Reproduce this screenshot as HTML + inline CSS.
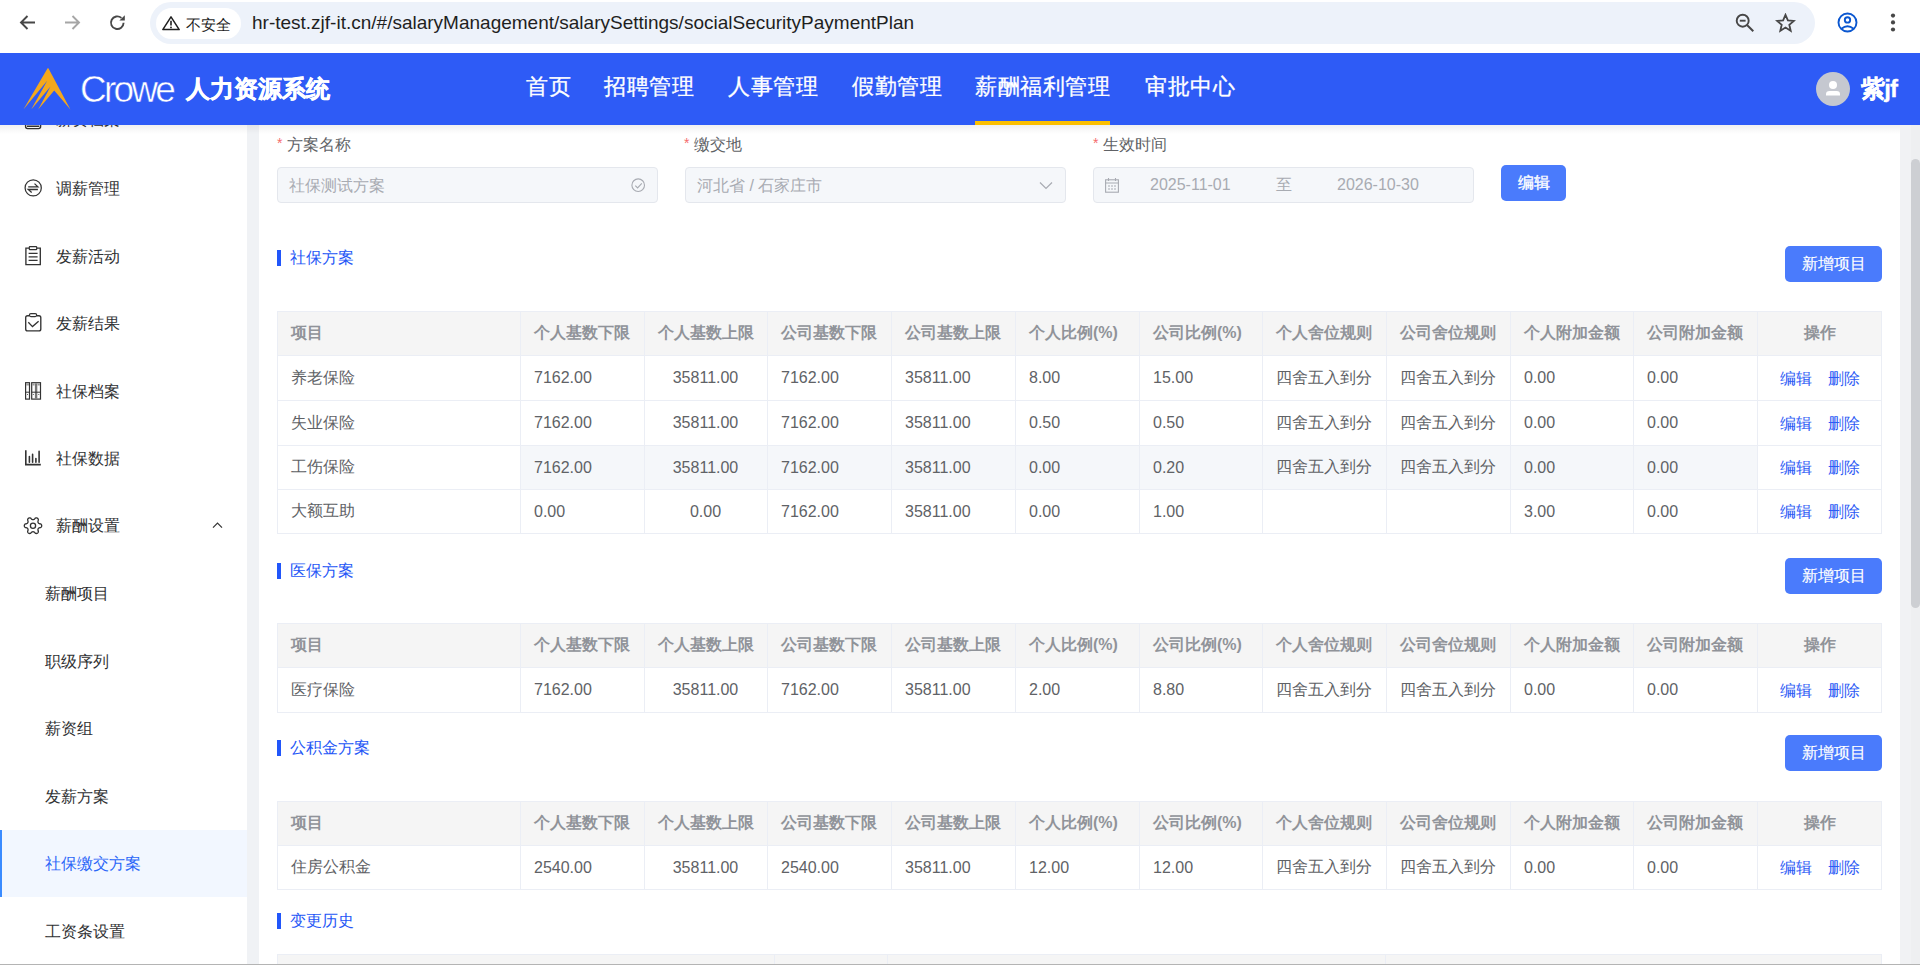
<!DOCTYPE html>
<html><head><meta charset="utf-8">
<style>
*{box-sizing:border-box;margin:0;padding:0}
html,body{width:1920px;height:965px;overflow:hidden;background:#fff;font-family:"Liberation Sans",sans-serif;color:#303133}
.abs{position:absolute}
#chrome{position:absolute;left:0;top:0;width:1920px;height:53px;background:#fff}
#omni{position:absolute;left:150px;top:2px;width:1665px;height:42px;border-radius:21px;background:#edf2fa}
#chip{position:absolute;left:156px;top:8px;width:85px;height:31px;border-radius:15.5px;background:#fff}
#url{position:absolute;left:252px;top:11px;font-size:19px;line-height:24px;color:#1f1f1f;white-space:nowrap}
#hdr{position:absolute;left:0;top:53px;width:1920px;height:72px;background:#2e5bf6}
.nav{position:absolute;top:0;height:72px;line-height:67.5px;font-size:22px;letter-spacing:0.5px;color:#fff;white-space:nowrap;-webkit-text-stroke:0.3px #fff}
#side{position:absolute;left:0;top:125px;width:247px;height:840px;background:#fff;overflow:hidden}
.mi{position:absolute;left:0;width:247px;height:67.4px;font-size:16px;color:#303133;white-space:nowrap}
.mi span{position:absolute;top:50%;transform:translateY(-50%);line-height:20px;margin-top:1px}
#mainbg{position:absolute;left:247px;top:125px;width:1673px;height:840px;background:#f0f2f5}
#card{position:absolute;left:259px;top:125px;width:1641px;height:840px;background:#fff}
#content{position:absolute;left:0;top:0;width:1920px;height:965px;overflow:hidden}
#shadow{position:absolute;left:0;top:125px;width:1920px;height:9px;background:linear-gradient(rgba(0,0,0,0.06),rgba(0,0,0,0))}
.ic{position:absolute;left:24px;top:50%;transform:translateY(-50%);height:19px;display:flex;align-items:center}
.chev{position:absolute;left:212px;display:block}
.mi.act{background:#f2f7ff;color:#2a66f8}
.mi.act::before{content:"";position:absolute;left:0;top:0;width:2px;height:100%;background:#3a8bff}
.tbl{position:absolute}
.th-bg{position:absolute;left:0;width:100%;background:#f5f5f5}
.th,.td{position:absolute;padding-left:14px;display:flex;align-items:center;white-space:nowrap;font-size:16px}
.th{font-weight:bold;color:#909399}
.td{color:#606266}
.th.c,.td.c{justify-content:center;padding-left:0}
.td.op{justify-content:center;padding-left:0}
.td.op a{color:#2d5bf5;margin:0 8px;position:relative;top:1px}
.hov{position:absolute;background:#f5f7fa}
.hl{position:absolute;left:0;width:100%;height:1px;background:#ebeef5}
.vl{position:absolute;top:0;bottom:0;width:1px;background:#ebeef5}
.sec{position:absolute;left:277px;height:16px;width:200px;color:#2456f6;white-space:nowrap}
.sec i{position:absolute;left:0;top:0;width:4px;height:16px;background:#2156fa}
.sec span{position:absolute;left:13px;top:-2px;font-size:16px;line-height:20px}
.btn{position:absolute;height:36px;border-radius:5px;background:#4a7bfc;color:#fff;font-size:16px;-webkit-text-stroke:0.15px #fff;display:flex;align-items:center;justify-content:center}
.btn.add{left:1785px;width:97px}
.lbl{position:absolute;font-size:16px;color:#606266;white-space:nowrap;top:135px;line-height:20px}
.lbl b{color:#f56c6c;font-weight:normal;font-size:14px;position:relative;top:-2px;margin-right:5px}
.inp{position:absolute;top:167px;width:381px;height:36px;border:1px solid #e4e7ed;border-radius:4px;background:#f5f7fa;color:#a8abb2;font-size:16px;line-height:34px;white-space:nowrap}
</style></head>
<body>
<div id="chrome">
  <div id="omni"></div>
  <div id="chip"></div>
  <div id="url">hr-test.zjf-it.cn/#/salaryManagement/salarySettings/socialSecurityPaymentPlan</div>
  <svg class="abs" style="left:18px;top:13px" width="19" height="19" viewBox="0 0 19 19"><path d="M17 9.5H3.5M9.5 3L3 9.5L9.5 16" fill="none" stroke="#474747" stroke-width="1.9"/></svg>
  <svg class="abs" style="left:63px;top:13px" width="19" height="19" viewBox="0 0 19 19"><path d="M2 9.5H15.5M9.5 3L16 9.5L9.5 16" fill="none" stroke="#a6a6a6" stroke-width="1.9"/></svg>
  <svg class="abs" style="left:108px;top:13px" width="19" height="19" viewBox="0 0 19 19"><path d="M15.6 9.8A6.3 6.3 0 1 1 13.4 4.9" fill="none" stroke="#474747" stroke-width="1.9"/><path d="M16.8 2.2V7.6H11.4Z" fill="#474747"/></svg>
  <svg class="abs" style="left:161px;top:15px" width="20" height="16" viewBox="0 0 20 16"><path d="M10 1.8L18.2 14.6H1.8Z" fill="none" stroke="#1f1f1f" stroke-width="1.5" stroke-linejoin="round"/><path d="M10 5.8V10.4" stroke="#1f1f1f" stroke-width="1.6"/><circle cx="10" cy="12.4" r="0.9" fill="#1f1f1f"/></svg>
  <div class="abs" style="left:186px;top:14.5px;font-size:15.3px;line-height:20px;color:#1f1f1f">不安全</div>
  <svg class="abs" style="left:1734px;top:12px" width="22" height="22" viewBox="0 0 22 22"><circle cx="8.7" cy="8.7" r="6" fill="none" stroke="#474747" stroke-width="1.9"/><path d="M13 13L19.3 19.3" stroke="#474747" stroke-width="2"/><path d="M5.8 8.7H11.6" stroke="#474747" stroke-width="1.9"/></svg>
  <svg class="abs" style="left:1775px;top:13px" width="21" height="20" viewBox="0 0 21 20"><path d="M10.5 1.8L12.9 7.4L18.9 7.9L14.3 11.8L15.7 17.8L10.5 14.6L5.3 17.8L6.7 11.8L2.1 7.9L8.1 7.4Z" fill="none" stroke="#474747" stroke-width="1.8" stroke-linejoin="miter"/></svg>
  <svg class="abs" style="left:1837px;top:12px" width="21" height="21" viewBox="0 0 21 21"><circle cx="10.5" cy="10.5" r="9" fill="none" stroke="#0b57d0" stroke-width="1.9"/><circle cx="10.5" cy="7.9" r="2.7" fill="none" stroke="#0b57d0" stroke-width="1.9"/><path d="M4.4 16.8Q10.5 11.6 16.6 16.8" fill="none" stroke="#0b57d0" stroke-width="1.9"/></svg>
  <svg class="abs" style="left:1889px;top:12px" width="8" height="22" viewBox="0 0 8 22"><circle cx="4" cy="3.6" r="2.1" fill="#474747"/><circle cx="4" cy="10.4" r="2.1" fill="#474747"/><circle cx="4" cy="17.5" r="2.1" fill="#474747"/></svg>
</div>
<div id="content"><div id="mainbg"></div><div id="card"></div>
<div class="lbl" style="left:277px"><b>*</b>方案名称</div>
<div class="lbl" style="left:684px"><b>*</b>缴交地</div>
<div class="lbl" style="left:1093px"><b>*</b>生效时间</div>
<div class="inp" style="left:277px"><span style="position:absolute;left:11px;top:1px">社保测试方案</span><svg style="position:absolute;left:353px;top:10px" width="15" height="15" viewBox="0 0 15 15"><circle cx="7.2" cy="7.2" r="6.3" fill="none" stroke="#a8abb2" stroke-width="1.1"/><path d="M4.3 7.6L6.6 9.9L10.8 5.4" fill="none" stroke="#a8abb2" stroke-width="1.1"/></svg></div>
<div class="inp" style="left:685px"><span style="position:absolute;left:11px;top:1px">河北省 / 石家庄市</span><svg style="position:absolute;left:352.5px;top:13px" width="14" height="9" viewBox="0 0 14 9"><path d="M1 1.5L7 7.5L13 1.5" fill="none" stroke="#a8abb2" stroke-width="1.2"/></svg></div>
<div class="inp" style="left:1093px"><svg style="position:absolute;left:11px;top:10px" width="14" height="15" viewBox="0 0 14 15"><rect x="0.6" y="1.8" width="12.8" height="12.4" fill="none" stroke="#a8abb2" stroke-width="1.1"/><path d="M0.6 5H13.4M3.5 0V3M10.5 0V3M3 8H5M6 8H8M9 8H11M3 11H5M6 11H8M9 11H11" stroke="#a8abb2" stroke-width="1.1"/></svg><span style="position:absolute;left:56px">2025-11-01</span><span style="position:absolute;left:182px">至</span><span style="position:absolute;left:243px">2026-10-30</span></div>
<div class="btn" style="left:1501px;top:165px;width:65px;-webkit-text-stroke:0.35px #fff">编辑</div>
<div class="sec" style="top:250px"><i></i><span>社保方案</span></div><div class="btn add" style="top:246px">新增项目</div>
<div class="tbl" style="left:277px;top:311px;width:1605px;height:223px">
<div class="th-bg" style="top:0;height:44px"></div>
<div class="th" style="left:0px;width:243px;top:1px;height:43px">项目</div>
<div class="th" style="left:243px;width:124px;top:1px;height:43px">个人基数下限</div>
<div class="th c" style="left:367px;width:123px;top:1px;height:43px">个人基数上限</div>
<div class="th" style="left:490px;width:124px;top:1px;height:43px">公司基数下限</div>
<div class="th" style="left:614px;width:124px;top:1px;height:43px">公司基数上限</div>
<div class="th" style="left:738px;width:124px;top:1px;height:43px">个人比例(%)</div>
<div class="th" style="left:862px;width:123px;top:1px;height:43px">公司比例(%)</div>
<div class="th" style="left:985px;width:124px;top:1px;height:43px">个人舍位规则</div>
<div class="th" style="left:1109px;width:124px;top:1px;height:43px">公司舍位规则</div>
<div class="th" style="left:1233px;width:123px;top:1px;height:43px">个人附加金额</div>
<div class="th" style="left:1356px;width:124px;top:1px;height:43px">公司附加金额</div>
<div class="th c" style="left:1480px;width:125px;top:1px;height:43px">操作</div>
<div class="td" style="left:0px;width:243px;top:45px;height:44px">养老保险</div>
<div class="td" style="left:243px;width:124px;top:45px;height:44px">7162.00</div>
<div class="td c" style="left:367px;width:123px;top:45px;height:44px">35811.00</div>
<div class="td" style="left:490px;width:124px;top:45px;height:44px">7162.00</div>
<div class="td" style="left:614px;width:124px;top:45px;height:44px">35811.00</div>
<div class="td" style="left:738px;width:124px;top:45px;height:44px">8.00</div>
<div class="td" style="left:862px;width:123px;top:45px;height:44px">15.00</div>
<div class="td" style="left:985px;width:124px;top:45px;height:44px">四舍五入到分</div>
<div class="td" style="left:1109px;width:124px;top:45px;height:44px">四舍五入到分</div>
<div class="td" style="left:1233px;width:123px;top:45px;height:44px">0.00</div>
<div class="td" style="left:1356px;width:124px;top:45px;height:44px">0.00</div>
<div class="td op" style="left:1480px;width:125px;top:45px;height:44px"><a>编辑</a><a>删除</a></div>
<div class="td" style="left:0px;width:243px;top:90px;height:44px">失业保险</div>
<div class="td" style="left:243px;width:124px;top:90px;height:44px">7162.00</div>
<div class="td c" style="left:367px;width:123px;top:90px;height:44px">35811.00</div>
<div class="td" style="left:490px;width:124px;top:90px;height:44px">7162.00</div>
<div class="td" style="left:614px;width:124px;top:90px;height:44px">35811.00</div>
<div class="td" style="left:738px;width:124px;top:90px;height:44px">0.50</div>
<div class="td" style="left:862px;width:123px;top:90px;height:44px">0.50</div>
<div class="td" style="left:985px;width:124px;top:90px;height:44px">四舍五入到分</div>
<div class="td" style="left:1109px;width:124px;top:90px;height:44px">四舍五入到分</div>
<div class="td" style="left:1233px;width:123px;top:90px;height:44px">0.00</div>
<div class="td" style="left:1356px;width:124px;top:90px;height:44px">0.00</div>
<div class="td op" style="left:1480px;width:125px;top:90px;height:44px"><a>编辑</a><a>删除</a></div>
<div class="hov" style="left:243px;width:1237px;top:135px;height:43px"></div>
<div class="td" style="left:0px;width:243px;top:135px;height:43px">工伤保险</div>
<div class="td" style="left:243px;width:124px;top:135px;height:43px">7162.00</div>
<div class="td c" style="left:367px;width:123px;top:135px;height:43px">35811.00</div>
<div class="td" style="left:490px;width:124px;top:135px;height:43px">7162.00</div>
<div class="td" style="left:614px;width:124px;top:135px;height:43px">35811.00</div>
<div class="td" style="left:738px;width:124px;top:135px;height:43px">0.00</div>
<div class="td" style="left:862px;width:123px;top:135px;height:43px">0.20</div>
<div class="td" style="left:985px;width:124px;top:135px;height:43px">四舍五入到分</div>
<div class="td" style="left:1109px;width:124px;top:135px;height:43px">四舍五入到分</div>
<div class="td" style="left:1233px;width:123px;top:135px;height:43px">0.00</div>
<div class="td" style="left:1356px;width:124px;top:135px;height:43px">0.00</div>
<div class="td op" style="left:1480px;width:125px;top:135px;height:43px"><a>编辑</a><a>删除</a></div>
<div class="td" style="left:0px;width:243px;top:179px;height:43px">大额互助</div>
<div class="td" style="left:243px;width:124px;top:179px;height:43px">0.00</div>
<div class="td c" style="left:367px;width:123px;top:179px;height:43px">0.00</div>
<div class="td" style="left:490px;width:124px;top:179px;height:43px">7162.00</div>
<div class="td" style="left:614px;width:124px;top:179px;height:43px">35811.00</div>
<div class="td" style="left:738px;width:124px;top:179px;height:43px">0.00</div>
<div class="td" style="left:862px;width:123px;top:179px;height:43px">1.00</div>
<div class="td" style="left:985px;width:124px;top:179px;height:43px"></div>
<div class="td" style="left:1109px;width:124px;top:179px;height:43px"></div>
<div class="td" style="left:1233px;width:123px;top:179px;height:43px">3.00</div>
<div class="td" style="left:1356px;width:124px;top:179px;height:43px">0.00</div>
<div class="td op" style="left:1480px;width:125px;top:179px;height:43px"><a>编辑</a><a>删除</a></div>
<div class="hl" style="top:0"></div>
<div class="hl" style="top:44px"></div>
<div class="hl" style="top:89px"></div>
<div class="hl" style="top:134px"></div>
<div class="hl" style="top:178px"></div>
<div class="hl" style="top:222px"></div>
<div class="vl" style="left:0px"></div>
<div class="vl" style="left:243px"></div>
<div class="vl" style="left:367px"></div>
<div class="vl" style="left:490px"></div>
<div class="vl" style="left:614px"></div>
<div class="vl" style="left:738px"></div>
<div class="vl" style="left:862px"></div>
<div class="vl" style="left:985px"></div>
<div class="vl" style="left:1109px"></div>
<div class="vl" style="left:1233px"></div>
<div class="vl" style="left:1356px"></div>
<div class="vl" style="left:1480px"></div>
<div class="vl" style="left:1604px"></div>
</div>
<div class="sec" style="top:563px"><i></i><span>医保方案</span></div><div class="btn add" style="top:558px">新增项目</div>
<div class="tbl" style="left:277px;top:623px;width:1605px;height:90px">
<div class="th-bg" style="top:0;height:44px"></div>
<div class="th" style="left:0px;width:243px;top:1px;height:43px">项目</div>
<div class="th" style="left:243px;width:124px;top:1px;height:43px">个人基数下限</div>
<div class="th c" style="left:367px;width:123px;top:1px;height:43px">个人基数上限</div>
<div class="th" style="left:490px;width:124px;top:1px;height:43px">公司基数下限</div>
<div class="th" style="left:614px;width:124px;top:1px;height:43px">公司基数上限</div>
<div class="th" style="left:738px;width:124px;top:1px;height:43px">个人比例(%)</div>
<div class="th" style="left:862px;width:123px;top:1px;height:43px">公司比例(%)</div>
<div class="th" style="left:985px;width:124px;top:1px;height:43px">个人舍位规则</div>
<div class="th" style="left:1109px;width:124px;top:1px;height:43px">公司舍位规则</div>
<div class="th" style="left:1233px;width:123px;top:1px;height:43px">个人附加金额</div>
<div class="th" style="left:1356px;width:124px;top:1px;height:43px">公司附加金额</div>
<div class="th c" style="left:1480px;width:125px;top:1px;height:43px">操作</div>
<div class="td" style="left:0px;width:243px;top:45px;height:44px">医疗保险</div>
<div class="td" style="left:243px;width:124px;top:45px;height:44px">7162.00</div>
<div class="td c" style="left:367px;width:123px;top:45px;height:44px">35811.00</div>
<div class="td" style="left:490px;width:124px;top:45px;height:44px">7162.00</div>
<div class="td" style="left:614px;width:124px;top:45px;height:44px">35811.00</div>
<div class="td" style="left:738px;width:124px;top:45px;height:44px">2.00</div>
<div class="td" style="left:862px;width:123px;top:45px;height:44px">8.80</div>
<div class="td" style="left:985px;width:124px;top:45px;height:44px">四舍五入到分</div>
<div class="td" style="left:1109px;width:124px;top:45px;height:44px">四舍五入到分</div>
<div class="td" style="left:1233px;width:123px;top:45px;height:44px">0.00</div>
<div class="td" style="left:1356px;width:124px;top:45px;height:44px">0.00</div>
<div class="td op" style="left:1480px;width:125px;top:45px;height:44px"><a>编辑</a><a>删除</a></div>
<div class="hl" style="top:0"></div>
<div class="hl" style="top:44px"></div>
<div class="hl" style="top:89px"></div>
<div class="vl" style="left:0px"></div>
<div class="vl" style="left:243px"></div>
<div class="vl" style="left:367px"></div>
<div class="vl" style="left:490px"></div>
<div class="vl" style="left:614px"></div>
<div class="vl" style="left:738px"></div>
<div class="vl" style="left:862px"></div>
<div class="vl" style="left:985px"></div>
<div class="vl" style="left:1109px"></div>
<div class="vl" style="left:1233px"></div>
<div class="vl" style="left:1356px"></div>
<div class="vl" style="left:1480px"></div>
<div class="vl" style="left:1604px"></div>
</div>
<div class="sec" style="top:740px"><i></i><span>公积金方案</span></div><div class="btn add" style="top:735px">新增项目</div>
<div class="tbl" style="left:277px;top:801px;width:1605px;height:89px">
<div class="th-bg" style="top:0;height:44px"></div>
<div class="th" style="left:0px;width:243px;top:1px;height:43px">项目</div>
<div class="th" style="left:243px;width:124px;top:1px;height:43px">个人基数下限</div>
<div class="th c" style="left:367px;width:123px;top:1px;height:43px">个人基数上限</div>
<div class="th" style="left:490px;width:124px;top:1px;height:43px">公司基数下限</div>
<div class="th" style="left:614px;width:124px;top:1px;height:43px">公司基数上限</div>
<div class="th" style="left:738px;width:124px;top:1px;height:43px">个人比例(%)</div>
<div class="th" style="left:862px;width:123px;top:1px;height:43px">公司比例(%)</div>
<div class="th" style="left:985px;width:124px;top:1px;height:43px">个人舍位规则</div>
<div class="th" style="left:1109px;width:124px;top:1px;height:43px">公司舍位规则</div>
<div class="th" style="left:1233px;width:123px;top:1px;height:43px">个人附加金额</div>
<div class="th" style="left:1356px;width:124px;top:1px;height:43px">公司附加金额</div>
<div class="th c" style="left:1480px;width:125px;top:1px;height:43px">操作</div>
<div class="td" style="left:0px;width:243px;top:45px;height:43px">住房公积金</div>
<div class="td" style="left:243px;width:124px;top:45px;height:43px">2540.00</div>
<div class="td c" style="left:367px;width:123px;top:45px;height:43px">35811.00</div>
<div class="td" style="left:490px;width:124px;top:45px;height:43px">2540.00</div>
<div class="td" style="left:614px;width:124px;top:45px;height:43px">35811.00</div>
<div class="td" style="left:738px;width:124px;top:45px;height:43px">12.00</div>
<div class="td" style="left:862px;width:123px;top:45px;height:43px">12.00</div>
<div class="td" style="left:985px;width:124px;top:45px;height:43px">四舍五入到分</div>
<div class="td" style="left:1109px;width:124px;top:45px;height:43px">四舍五入到分</div>
<div class="td" style="left:1233px;width:123px;top:45px;height:43px">0.00</div>
<div class="td" style="left:1356px;width:124px;top:45px;height:43px">0.00</div>
<div class="td op" style="left:1480px;width:125px;top:45px;height:43px"><a>编辑</a><a>删除</a></div>
<div class="hl" style="top:0"></div>
<div class="hl" style="top:44px"></div>
<div class="hl" style="top:88px"></div>
<div class="vl" style="left:0px"></div>
<div class="vl" style="left:243px"></div>
<div class="vl" style="left:367px"></div>
<div class="vl" style="left:490px"></div>
<div class="vl" style="left:614px"></div>
<div class="vl" style="left:738px"></div>
<div class="vl" style="left:862px"></div>
<div class="vl" style="left:985px"></div>
<div class="vl" style="left:1109px"></div>
<div class="vl" style="left:1233px"></div>
<div class="vl" style="left:1356px"></div>
<div class="vl" style="left:1480px"></div>
<div class="vl" style="left:1604px"></div>
</div>
<div class="sec" style="top:913px"><i></i><span>变更历史</span></div>
<div class="abs" style="left:277px;top:954px;width:1605px;height:11px;background:#f5f5f5;border-top:1px solid #ebeef5;border-left:1px solid #ebeef5;border-right:1px solid #ebeef5"></div>
<div class="abs" style="left:774px;top:954px;width:1px;height:11px;background:#ebeef5"></div>
<div class="abs" style="left:887px;top:954px;width:1px;height:11px;background:#ebeef5"></div>
<div class="abs" style="left:1385px;top:954px;width:1px;height:11px;background:#ebeef5"></div>
</div>
<div id="hdr">
  <div class="nav" style="left:526px">首页</div>
  <div class="nav" style="left:604px">招聘管理</div>
  <div class="nav" style="left:728px">人事管理</div>
  <div class="nav" style="left:852px">假勤管理</div>
  <div class="nav" style="left:975px">薪酬福利管理</div>
  <div class="nav" style="left:1145px">审批中心</div>
  <svg class="abs" style="left:15px;top:7px" width="64" height="58" viewBox="15 60 64 58"><path d="M47.6 68.2H48.4L70.4 109.6L54.2 90.6L38.2 109.6L50.5 86.4L31.2 109.6L47.2 80.8L23.4 109.6Z" fill="#f4a81d"/></svg>
  <div class="abs" style="left:80px;top:1px;height:72px;line-height:72px;font-size:37px;color:#fff;letter-spacing:-2.8px;white-space:nowrap;-webkit-text-stroke:0.5px #2e5bf6">Crowe</div>
  <div class="abs" style="left:186px;top:0;height:72px;line-height:71px;font-size:24px;font-weight:bold;color:#fff;white-space:nowrap;-webkit-text-stroke:0.5px #fff">人力资源系统</div>
  <div class="abs" style="left:975px;top:68px;width:135px;height:4px;background:#fbbf00"></div>
  <div class="abs" style="left:1816px;top:19px;width:34px;height:34px;border-radius:50%;background:#c5c8d0"><svg class="abs" style="left:10px;top:9px" width="14" height="16" viewBox="0 0 14 16"><circle cx="7" cy="4.1" r="4" fill="#fff"/><path d="M0 13Q0 10 3.5 10H10.5Q14 10 14 13V14.6H0Z" fill="#fff"/></svg></div>
  <div class="abs" style="left:1861px;top:1px;height:72px;line-height:70px;font-size:24px;font-weight:bold;color:#fff;white-space:nowrap;letter-spacing:-0.8px;-webkit-text-stroke:0.3px #fff">紫jf</div>
</div>
<div id="side"><div class="mi" style="top:-39.7px"><span style="left:56px">薪资档案</span></div>
<div class="mi" style="top:29.8px"><span style="left:56px">调薪管理</span></div>
<div class="mi" style="top:97.2px"><span style="left:56px">发薪活动</span></div>
<div class="mi" style="top:164.6px"><span style="left:56px">发薪结果</span></div>
<div class="mi" style="top:232.0px"><span style="left:56px">社保档案</span></div>
<div class="mi" style="top:299.4px"><span style="left:56px">社保数据</span></div>
<div class="mi" style="top:366.8px"><span style="left:56px">薪酬设置</span></div>
<svg class="abs" style="left:0;top:0" width="247" height="840" viewBox="0 125 247 840" fill="none" stroke="#333" stroke-width="1.3">
<path d="M25.6 112V126.6Q25.6 128.6 27.6 128.6H38.6Q40.6 128.6 40.6 126.6V112M27 126.2H39.2" stroke-width="1.4"/>
<circle cx="33.2" cy="187.9" r="8.1" stroke-width="1.25"/>
<path d="M28.2 186.9H37.9L34.5 183.6" stroke-width="1.3"/>
<path d="M37.9 189.5H28.2L31.7 192.6" stroke-width="1.3"/>
<path d="M29.2 248.1H25.9V264.6H40.3V248.1H36.8" stroke-width="1.35"/>
<rect x="29.3" y="246.6" width="7.4" height="3.1" rx="0.6" stroke-width="1.2"/>
<path d="M28.6 253.4H37.6M28.6 256.9H37.6M28.6 260.4H37.6" stroke-width="1.3"/>
<path d="M29.4 315.7H27.6Q25.7 315.7 25.7 317.6V329Q25.7 330.9 27.6 330.9H38.9Q40.8 330.9 40.8 329V317.6Q40.8 315.7 38.9 315.7H36.7" stroke-width="1.35"/>
<rect x="29.4" y="313.6" width="7.3" height="3" rx="1.5" stroke-width="1.2"/>
<path d="M28.3 322.3L32.5 326.6L38.6 321.2" stroke-width="1.35"/>
<rect x="25.6" y="382.7" width="3.9" height="16.4" stroke-width="1.2"/>
<rect x="31.7" y="382.7" width="8.8" height="16.4" stroke-width="1.2"/>
<rect x="34.9" y="383.3" width="2.4" height="15.4" fill="#777" stroke="none"/>
<path d="M26.2 384.6H29M32.3 384.6H34.6M37.6 384.6H39.9" stroke="#999" stroke-width="2"/>
<path d="M25.6 392.2H29.5M31.7 392.2H40.5" stroke-width="1"/>
<circle cx="27.5" cy="394.6" r="0.5" fill="#333" stroke="none"/><circle cx="33.3" cy="394.6" r="0.5" fill="#333" stroke="none"/><circle cx="38.8" cy="394.6" r="0.5" fill="#333" stroke="none"/>
<path d="M25.8 450.2V464.6H40.8" stroke-width="1.6"/>
<path d="M29.4 462.3V456.6M32.6 462.3V454.4M35.9 462.3V458.5M39.1 462.3V451.4" stroke-width="1.6" stroke-linecap="round"/>
<path d="M41.70 525.70 L41.68 526.00 L41.61 526.30 L41.49 526.59 L41.33 526.87 L41.12 527.13 L40.84 527.37 L40.47 527.56 L39.73 527.63 L39.36 527.77 L39.07 527.91 L38.83 528.06 L38.63 528.21 L38.46 528.36 L38.31 528.53 L38.20 528.70 L38.10 528.89 L38.03 529.10 L37.98 529.32 L37.96 529.57 L37.95 529.85 L37.97 530.17 L38.04 530.56 L38.35 531.24 L38.36 531.66 L38.30 532.01 L38.18 532.33 L38.02 532.61 L37.83 532.85 L37.60 533.06 L37.35 533.23 L37.08 533.37 L36.78 533.46 L36.47 533.50 L36.15 533.50 L35.82 533.44 L35.48 533.32 L35.12 533.10 L34.69 532.49 L34.39 532.24 L34.12 532.06 L33.88 531.93 L33.64 531.83 L33.42 531.76 L33.21 531.71 L33.00 531.70 L32.79 531.71 L32.58 531.76 L32.36 531.83 L32.12 531.93 L31.88 532.06 L31.61 532.24 L31.31 532.49 L30.88 533.10 L30.52 533.32 L30.18 533.44 L29.85 533.50 L29.53 533.50 L29.22 533.46 L28.92 533.37 L28.65 533.23 L28.40 533.06 L28.17 532.85 L27.98 532.61 L27.82 532.33 L27.70 532.01 L27.64 531.66 L27.65 531.24 L27.96 530.56 L28.03 530.17 L28.05 529.85 L28.04 529.57 L28.02 529.32 L27.97 529.10 L27.90 528.89 L27.80 528.70 L27.69 528.53 L27.54 528.36 L27.37 528.21 L27.17 528.06 L26.93 527.91 L26.64 527.77 L26.27 527.63 L25.53 527.56 L25.16 527.37 L24.88 527.13 L24.67 526.87 L24.51 526.59 L24.39 526.30 L24.32 526.00 L24.30 525.70 L24.32 525.40 L24.39 525.10 L24.51 524.81 L24.67 524.53 L24.88 524.27 L25.16 524.03 L25.53 523.84 L26.27 523.77 L26.64 523.63 L26.93 523.49 L27.17 523.34 L27.37 523.19 L27.54 523.04 L27.69 522.87 L27.80 522.70 L27.90 522.51 L27.97 522.30 L28.02 522.08 L28.04 521.83 L28.05 521.55 L28.03 521.23 L27.96 520.84 L27.65 520.16 L27.64 519.74 L27.70 519.39 L27.82 519.07 L27.98 518.79 L28.17 518.55 L28.40 518.34 L28.65 518.17 L28.92 518.03 L29.22 517.94 L29.53 517.90 L29.85 517.90 L30.18 517.96 L30.52 518.08 L30.88 518.30 L31.31 518.91 L31.61 519.16 L31.88 519.34 L32.12 519.47 L32.36 519.57 L32.58 519.64 L32.79 519.69 L33.00 519.70 L33.21 519.69 L33.42 519.64 L33.64 519.57 L33.88 519.47 L34.12 519.34 L34.39 519.16 L34.69 518.91 L35.12 518.30 L35.48 518.08 L35.82 517.96 L36.15 517.90 L36.47 517.90 L36.78 517.94 L37.08 518.03 L37.35 518.17 L37.60 518.34 L37.83 518.55 L38.02 518.79 L38.18 519.07 L38.30 519.39 L38.36 519.74 L38.35 520.16 L38.04 520.84 L37.97 521.23 L37.95 521.55 L37.96 521.83 L37.98 522.08 L38.03 522.30 L38.10 522.51 L38.20 522.70 L38.31 522.87 L38.46 523.04 L38.63 523.19 L38.83 523.34 L39.07 523.49 L39.36 523.63 L39.73 523.77 L40.47 523.84 L40.84 524.03 L41.12 524.27 L41.33 524.53 L41.49 524.81 L41.61 525.10 L41.68 525.40Z" stroke-width="1.3"/>
<circle cx="33" cy="525.8" r="2.6" stroke-width="1.3"/>
<path d="M213 527.6L217.5 523.1L222 527.6" stroke-width="1.2"/>
</svg>
<div class="mi" style="top:434.8px"><span style="left:45px">薪酬项目</span></div>
<div class="mi" style="top:502.3px"><span style="left:45px">职级序列</span></div>
<div class="mi" style="top:569.7px"><span style="left:45px">薪资组</span></div>
<div class="mi" style="top:637.1px"><span style="left:45px">发薪方案</span></div>
<div class="mi act" style="top:704.6px"><span style="left:45px">社保缴交方案</span></div>
<div class="mi" style="top:772.0px"><span style="left:45px">工资条设置</span></div></div>
<div id="shadow"></div>
<div class="abs" style="left:1900px;top:125px;width:20px;height:840px;background:#f1f2f4"></div>
<div class="abs" style="left:1911px;top:125px;width:9px;height:840px;background:#eeeff1"></div>
<div class="abs" style="left:1911px;top:159px;width:9px;height:449px;border-radius:4.5px;background:#cdcfd3"></div>
<div class="abs" style="left:0;top:964px;width:1920px;height:1px;background:#b4b4b4"></div>
</body></html>
